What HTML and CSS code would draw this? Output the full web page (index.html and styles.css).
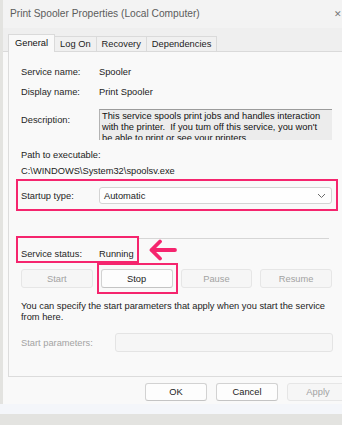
FILE: index.html
```html
<!DOCTYPE html>
<html lang="en">
<head>
<meta charset="UTF-8" />
<meta name="viewport" content="width=device-width, initial-scale=1" />
<title>Print Spooler Properties</title>
<link rel="stylesheet" href="styles.css">
</head>
<body>

<div class="window">
  <div class="titlebar">
    <span class="title">Print Spooler Properties (Local Computer)</span>
    <span class="close">&#x2715;</span>
  </div>

  <div class="tabs">
    <div class="tab active">General</div>
    <div class="tab">Log On</div>
    <div class="tab">Recovery</div>
    <div class="tab">Dependencies</div>
  </div>

  <div class="panel">
    <div class="row">
      <span class="label">Service name:</span>
      <span>Spooler</span>
    </div>
    <div class="row gap6">
      <span class="label">Display name:</span>
      <span>Print Spooler</span>
    </div>

    <div class="desc-row">
      <span class="label desc-label">Description:</span>
      <div class="desc-box">This service spools print jobs and handles interaction with the printer.&nbsp; If you tum off this service, you won't be able to print or see your printers.</div>
    </div>

    <div class="path-label">Path to executable:</div>
    <div class="path-value">C:\WINDOWS\System32\spoolsv.exe</div>

    <div class="startup mark">
      <span class="label">Startup type:</span>
      <div class="combo">
        <span>Automatic</span>
        <svg width="9" height="6" viewBox="0 0 9 6"><path d="M1 1 L4.5 4.5 L8 1" fill="none" stroke="#6b6b6b" stroke-width="1"/></svg>
      </div>
    </div>

    <div class="separator"></div>

    <div class="status-row">
      <div class="status mark">
        <span class="label">Service status:</span>
        <span>Running</span>
      </div>
      <svg class="arrow" width="30" height="22" viewBox="0 0 30 22">
        <path d="M12 2.5 L3.5 11 L12 19.5 M3.5 11 H27" fill="none" stroke="#f5256e" stroke-width="3.8" stroke-linecap="round" stroke-linejoin="round"/>
      </svg>
    </div>

    <div class="controls">
      <button class="btn" disabled>Start</button>
      <div class="stop-mark"><button class="btn">Stop</button></div>
      <button class="btn" disabled>Pause</button>
      <button class="btn" disabled>Resume</button>
    </div>

    <p class="hint">You can specify the start parameters that apply when you start the service from here.</p>

    <div class="params">
      <span class="params-label">Start parameters:</span>
      <input type="text" class="params-input" disabled>
    </div>
  </div>

  <div class="footer">
    <button class="btn dlg">OK</button>
    <button class="btn dlg">Cancel</button>
    <button class="btn dlg" disabled>Apply</button>
  </div>
</div>

<div class="below"></div>

</body>
</html>
```

FILE: styles.css
```css
html, body {
  overflow: hidden;
}
body {
  margin: 0;
  background: #e3e3e0;
  font-family: "Liberation Sans", Arial, sans-serif;
  font-size: 9.3px;
  color: #1c1c1c;
}
.window {
  width: 347px;
  margin-left: 3px;
  background: #f9f9f9;
}
.titlebar {
  height: 27px;
  display: flex;
  align-items: center;
  padding: 0 8px 1px 7px;
  background: #f3f3f3;
}
.title {
  font-size: 10.2px;
  color: #5c5c5c;
}
.close {
  margin-left: auto;
  font-size: 9px;
  color: #777;
}
.tabs {
  height: 23px;
  display: flex;
  align-items: flex-end;
  padding-left: 5px;
  background: #efefef;
  border-bottom: 1px solid #dadada;
}
.tab {
  height: 14px;
  line-height: 14px;
  padding: 0 5px;
  background: #f0f0f0;
  border: 1px solid #dadada;
  border-bottom: none;
  border-left: none;
}
.tab.active {
  height: 17px;
  line-height: 17px;
  padding: 0 6px;
  margin-bottom: -1px;
  background: #f9f9f9;
  border-left: 1px solid #dadada;
  color: #111;
}
.panel {
  margin: 0 5px;
  padding: 13px 12px 24px;
  background: #f9f9f9;
  border: 1px solid #dcdcdc;
  border-top: none;
}
.row {
  display: flex;
  line-height: 14px;
}
.gap6 {
  margin-top: 6px;
}
.label {
  width: 78px;
  flex: none;
  color: #262626;
}
.desc-row {
  display: flex;
  margin-top: 10px;
}
.desc-label {
  padding-top: 4px;
  line-height: 14px;
}
.desc-box {
  flex: 1;
  height: 31px;
  box-sizing: border-box;
  overflow: hidden;
  padding: 1px 8px 0 2px;
  line-height: 11px;
  background: #ececec;
  border-top: 1px solid #9c9c9c;
  border-left: 1px solid #b3b3b3;
  color: #111;
}
.path-label {
  margin-top: 8px;
  line-height: 14px;
}
.path-value {
  margin-top: 2px;
  line-height: 14px;
}
.mark {
  border: 2px solid #f5256e;
  background: #f9f9f9;
}
.startup {
  display: flex;
  align-items: center;
  margin: 1px -6px 0 -5px;
  padding: 6px 4px 5px 3px;
}
.combo {
  flex: 1;
  height: 17px;
  box-sizing: border-box;
  display: flex;
  align-items: center;
  justify-content: space-between;
  padding: 0 5px 0 4px;
  background: #fefefe;
  border: 1px solid #d4d4d4;
  border-radius: 3px;
}
.separator {
  height: 1px;
  margin: 27px 3px 0 0;
  background: #d6d6d6;
}
.status-row {
  display: flex;
  align-items: center;
  margin: -3px 0 0 -5px;
}
.status {
  display: flex;
  padding: 9px 3px 0 3px;
  line-height: 14px;
}
.arrow {
  margin-left: 9px;
}
.controls {
  display: grid;
  grid-template-columns: repeat(4, 1fr);
  gap: 8px;
  margin-top: 6px;
}
.btn {
  height: 19px;
  padding: 0;
  font-family: inherit;
  font-size: 9.3px;
  color: #1c1c1c;
  background: #fdfdfd;
  border: 1px solid #d2d2d2;
  border-bottom-color: #c4c4c4;
  border-radius: 3px;
}
.btn:disabled {
  color: #a2a2a2;
  background: #f6f6f6;
  border-color: #e6e6e6;
}
.stop-mark {
  display: flex;
  margin: -6px -5px -6px -4px;
  padding: 4px 3px 4px 2px;
  border: 2px solid #f5256e;
}
.stop-mark .btn {
  flex: 1;
}
.hint {
  margin: 13px 0 0;
  line-height: 11px;
}
.params {
  display: flex;
  align-items: center;
  margin-top: 10px;
}
.params-label {
  width: 94px;
  flex: none;
  color: #a3a3a3;
}
.params-input {
  flex: 1;
  height: 19px;
  box-sizing: border-box;
  margin: 0 -1px 0 0;
  background: #f6f6f6;
  border: 1px solid #e4e4e4;
  border-radius: 3px;
}
.footer {
  display: flex;
  justify-content: flex-end;
  gap: 9px;
  padding: 6px 1px 3px 0;
}
.dlg {
  width: 62px;
  height: 18px;
}
.below {
  height: 10px;
  background: #f4f6fa;
}
```
